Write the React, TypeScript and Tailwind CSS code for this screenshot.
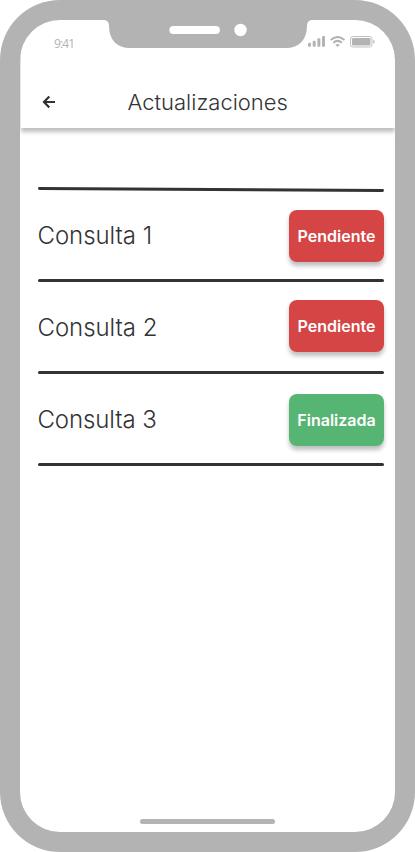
import React from "react";

type Row = { name: string; status: string; tone: string; offset: string; label: string };

const rows: Row[] = [
  { name: "Consulta 1", status: "Pendiente", tone: "bg-[#d64545]", offset: "mt-[18px]", label: "mt-[28px] tracking-[-0.05px]" },
  { name: "Consulta 2", status: "Pendiente", tone: "bg-[#d64545]", offset: "mt-[18px]", label: "mt-[30px] tracking-[-0.05px]" },
  { name: "Consulta 3", status: "Finalizada", tone: "bg-[#57b574]", offset: "mt-[20px]", label: "mt-[30px] tracking-[-0.1px]" },
];

function Notch() {
  return (
    <svg className="absolute left-[83px] top-0" width="210" height="28" viewBox="0 0 210 28">
      <path d="M0 0C4 0 6 2 6 6C6 20 14 28 27 28H183C196 28 204 20 204 6C204 2 206 0 210 0Z" fill="#b3b3b3" />
      <rect x="66.400" y="6" width="50.500" height="8" rx="4" fill="#fff" />
      <circle cx="137.500" cy="10" r="6.200" fill="#fff" />
    </svg>
  );
}

function StatusIcons() {
  return (
    <svg width="68" height="12" viewBox="0 0 68 12" fill="#b3b3b3">
      <rect x="0" y="6.700" width="3" height="4" rx="1" />
      <rect x="4.700" y="4.700" width="3" height="6" rx="1" />
      <rect x="9.400" y="2.300" width="3" height="8.400" rx="1" />
      <rect x="14" y="0" width="3" height="10.700" rx="1" />
      <g fill="none" stroke="#b3b3b3" strokeWidth="2">
        <path d="M22.700 3.900Q29.600 -1.900 36.500 3.900" />
        <path d="M25.200 6.700Q29.600 3.100 34 6.700" />
      </g>
      <path d="M27.300 8.700Q29.600 7.100 31.900 8.700L29.600 11Z" />
      <rect x="42.500" y="0.500" width="21.500" height="10.500" rx="2.500" fill="none" stroke="#c0c0c0" />
      <rect x="44" y="2" width="18.500" height="7.500" rx="1.300" />
      <path d="M65.200 3.800Q66.800 4.300 66.800 5.700T65.200 7.700Z" fill="#c0c0c0" />
    </svg>
  );
}

function ConsultaRow({ row, first }: { row: Row; first: boolean }) {
  return (
    <div className={`${first ? "h-[90px]" : "h-[92px]"} flex flex-col`}>
      <div className="flex flex-1 items-start justify-between">
        <h2 className={`${row.label} -ml-[0.5px] whitespace-nowrap text-[24px] font-light leading-8`}>{row.name}</h2>
        <button className={`${row.offset} ${row.tone} h-[52px] w-[95px] rounded-lg text-[16px] font-semibold leading-5 text-white shadow-[0_4px_4px_rgba(0,0,0,0.25)]`}>
          {row.status}
        </button>
      </div>
      <div className="h-[3px] shrink-0 rounded-full bg-[#333334]" />
    </div>
  );
}

export default function App() {
  return (
    <div className="h-[852px] w-[415px] overflow-hidden bg-white font-['Inter',sans-serif] text-[#333334]">
      <div className="h-full w-full rounded-[60px] bg-[#b3b3b3] p-5">
        <div className="relative flex h-full flex-col overflow-hidden rounded-[40px] bg-white">
          <Notch />
          <header className="ml-px h-[108px] shrink-0 shadow-[0_4px_4px_rgba(0,0,0,0.25)]">
            <div className="flex h-[52px] justify-between pl-[33px] pr-[19px] pt-[16px]">
              <span className="mt-px font-['Open_Sans',sans-serif] text-[12px] font-medium leading-[14px] tracking-[-0.9px] text-[#b3b3b3]">9:41</span>
              <StatusIcons />
            </div>
            <div className="flex h-[60px] items-center pl-[21px]">
              <svg width="14" height="14" viewBox="0 0 14 14" fill="none" stroke="#333334" strokeWidth="2.200">
                <path d="M7.300 1.500L2 7L7.300 12.500M2 7H13" />
              </svg>
              <h1 className="ml-[71.5px] whitespace-nowrap text-[22px] font-light leading-7">Actualizaciones</h1>
            </div>
          </header>
          <main className="pl-[18px] pr-[11px] pt-[59px]">
            <svg className="block" width="346" height="5" viewBox="0 0 346 5">
              <path d="M1.500 1.500L344.500 3.500" stroke="#333334" strokeWidth="3" strokeLinecap="round" />
            </svg>
            {rows.map((row, index) => (
              <ConsultaRow key={row.name} row={row} first={index === 0} />
            ))}
          </main>
          <footer className="mt-auto flex justify-center pb-[8px]">
            <div className="h-[5px] w-[135px] rounded-full bg-[#b3b3b3]" />
          </footer>
        </div>
      </div>
    </div>
  );
}
